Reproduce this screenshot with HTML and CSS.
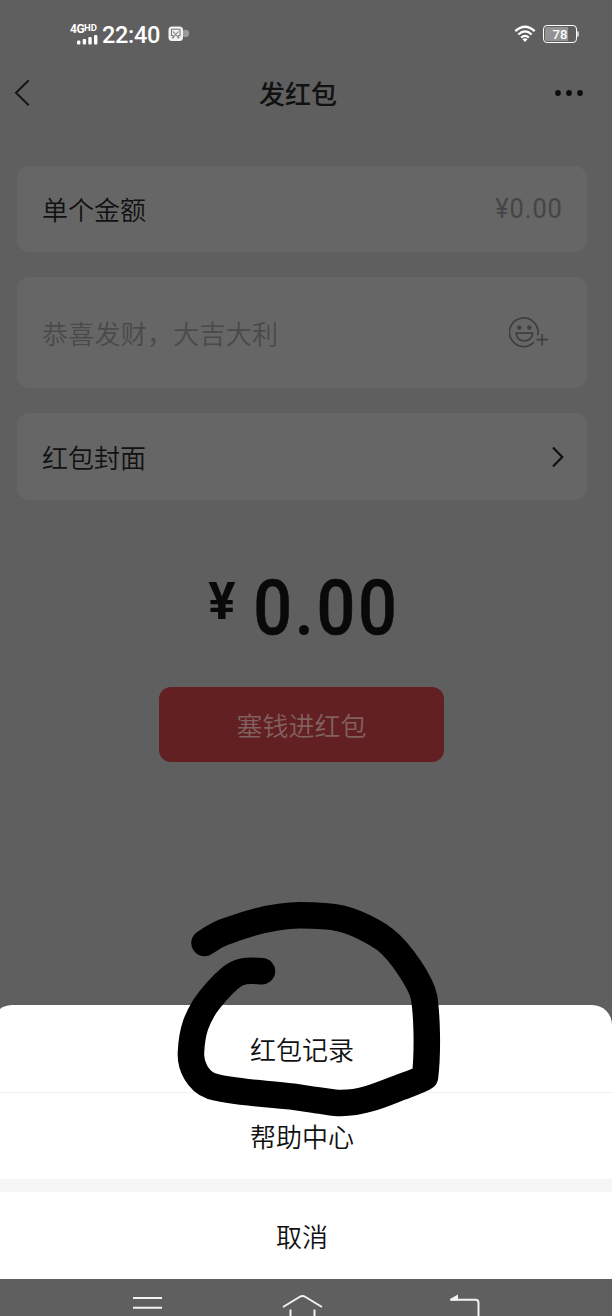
FILE: index.html
```html
<!DOCTYPE html>
<html lang="zh-CN">
<head>
<meta charset="utf-8">
<title>发红包</title>
<link rel="stylesheet" href="styles.css">
</head>
<body>
<div class="screen">
  <header class="status">
    <div class="signal">
      <span class="net">4G<small>HD</small></span>
      <svg width="21" height="10" viewBox="0 0 21 10" fill="#fff"><rect x="0" y="5.500" width="3.400" height="4" rx="1"/><rect x="5.700" y="4" width="3.400" height="5.500" rx="1"/><rect x="11.300" y="2" width="3.400" height="7.500" rx="1"/><rect x="17" y="0" width="3.400" height="9.500" rx="1"/></svg>
    </div>
    <span class="clock">22:40</span>
    <svg class="app" width="22" height="16" viewBox="0 0 22 16"><circle cx="17.500" cy="7.500" r="3.700" fill="#999"/><rect x=".5" y=".5" width="14.500" height="14.500" rx="3.500" fill="#f2f2f2"/><path d="M3 3.200h9.500M3.500 3.500v6h2M12 3.500v6h-2M5 5.500l5.500 6M10.500 5.500l-5.500 6" fill="none" stroke="#777" stroke-width="1.100"/><circle cx="5" cy="11.500" r="1" fill="#777"/><circle cx="10.500" cy="11.500" r="1" fill="#777"/></svg>
    <svg class="wifi" width="22" height="18" viewBox="0 0 22 18" fill="none" stroke="#fff" stroke-width="2.300"><path d="M1.300 6.200Q11-2.800 20.700 6.200M4.300 9.500Q11 3.300 17.700 9.500M7.200 12.600Q11 9.200 14.800 12.600"/><path d="M8.500 14.200Q11 12.500 13.500 14.200L11 17Z" fill="#fff" stroke="none"/></svg>
    <div class="battery"><span>78</span></div>
  </header>

  <nav class="titlebar">
    <svg width="18" height="28" viewBox="0 0 18 28" fill="none" stroke="#151515" stroke-width="2"><path d="M15.700 1.200L3 13.700L15.700 26.200"/></svg>
    <h1>发红包</h1>
    <svg width="30" height="8" viewBox="0 0 30 8" fill="#0d0d0d"><circle cx="4" cy="4" r="2.900"/><circle cx="15" cy="4" r="2.900"/><circle cx="26" cy="4" r="2.900"/></svg>
  </nav>

  <main class="form">
    <section class="card"><span>单个金额</span><span class="money">¥0.00</span></section>
    <section class="card wish"><span class="hint">恭喜发财，大吉大利</span>
      <svg width="40" height="32" viewBox="0 0 40 32" fill="none" stroke="#3f3f3f" stroke-width="1.700"><path d="M28.700 19.200A14.300 14.300 0 1 0 25 26.200"/><circle cx="10.200" cy="11.500" r="2.200" fill="#3f3f3f" stroke="none"/><circle cx="20.400" cy="11.500" r="2.200" fill="#3f3f3f" stroke="none"/><path d="M7.100 17.200H23.600C23 22 20 24.900 15.300 24.900S7.700 22 7.100 17.200Z"/><path d="M27.500 23.700H39M33.200 18V29.700"/></svg>
    </section>
    <section class="card cover"><span>红包封面</span>
      <svg width="13" height="22" viewBox="0 0 13 22" fill="none" stroke="#101010" stroke-width="2.200"><path d="M2 1.500L11.200 11L2 20.500"/></svg>
    </section>
    <div class="total"><span class="yen">¥</span><span class="sum">0.00</span></div>
    <button class="pay">塞钱进红包</button>
  </main>

  <section class="sheet">
    <div class="option">红包记录</div>
    <div class="option">帮助中心</div>
    <div class="option cancel">取消</div>
  </section>

  <footer class="system">
    <svg width="620" height="37" viewBox="-8 0 620 37" fill="none" stroke="#f2f2f2" stroke-width="2"><path d="M133 19H162M133 28.700H162"/><path d="M283 28L299.500 18Q302.500 16.200 305.500 18L322 28M290.500 30.500V37M314.500 30.500V37"/><path d="M451 20.800H475.500Q478.500 20.800 478.500 24V37"/><path d="M450 21.500V20L458 15.500V21.500Z" fill="#f2f2f2" stroke="none"/></svg>
  </footer>
</div>
<svg class="scribble" width="612" height="1316" viewBox="0 0 612 1316"><path d="M204.500 943C215 936 219 933.500 230 930C252 922 278 915.300 300 915.300C317 915.300 329 915.700 341 918.500C356 922 375 932 385 939.500C401 952 421 983 424 997C427 1015 428 1052 425 1077C421 1080 412 1083 401 1087C383 1094 363 1103 341 1103C332 1103 326 1101 315 1100L293 1096.700C260 1093 230 1092 211 1086C198 1081 190 1066 191 1052C192 1030 197 1019 205 1006C213 995 221 986 229 979C239 970 248 970 262 971.200"/></svg>
</body>
</html>
```
FILE: styles.css
```css
* { box-sizing: border-box; }
html { background: #5f5f5f; }
body {
  margin: 0;
  height: 1316px;
  position: relative;
  overflow: hidden;
  color: #111;
  font: 350 26px/36px "Noto Sans CJK SC", sans-serif;
}
svg { display: block; flex: none; }

/* The screen extends 8px past the left edge of the view. */
.screen {
  width: 620px;
  height: 1316px;
  margin-left: -8px;
  display: flex;
  flex-direction: column;
  background: #5f5f5f;
}

.status {
  height: 68px;
  display: flex;
  align-items: center;
  padding: 0 36px 0 77px;
  color: #fff;
  font-family: Roboto, sans-serif;
}
.signal { width: 29px; display: flex; flex-direction: column; align-items: flex-end; }
.net { display: flex; width: 28px; font-size: 12px; line-height: 11px; font-weight: 700; letter-spacing: -.5px; }
.net small { font-size: 9.500px; line-height: 8px; letter-spacing: 0; }
.clock { width: 66px; margin: 2px 0 0 4px; font: 500 23.500px/30px Roboto, sans-serif; letter-spacing: -.3px; }
.wifi { margin-left: auto; }
.battery {
  position: relative;
  width: 34px;
  height: 18px;
  margin-left: 7px;
  margin-right: -1px;
  padding: 1px;
  border: 1.500px solid #fff;
  border-radius: 4px;
  background: linear-gradient(90deg, #929292 76%, #5f5f5f 76%) content-box;
  text-align: center;
  font: 500 13px/15px Roboto, sans-serif;
}
.battery::after {
  content: "";
  position: absolute;
  right: -3px;
  top: 5px;
  width: 2px;
  height: 6px;
  border-radius: 0 2px 2px 0;
  background: #ccc;
}

.titlebar {
  height: 50px;
  display: flex;
  align-items: center;
  justify-content: space-between;
  padding: 0 28px 0 21px;
}
.titlebar h1 { margin: 0 -11px 0 0; font-size: 26px; line-height: 36px; font-weight: 500; }

.form {
  display: flex;
  flex-direction: column;
  gap: 25px;
  height: 887px;
  padding: 48px 25px 0;
}
.card {
  height: 86px;
  padding: 0 25px;
  display: flex;
  align-items: center;
  justify-content: space-between;
  border-radius: 12px;
  background: #666;
}
.money {
  color: #454545;
  margin-right: -1px;
  font: 400 27px/32px Roboto, sans-serif;
  letter-spacing: 1px;
  transform: scaleX(.94);
  transform-origin: right;
}
.wish { height: 111px; padding-right: 38px; }
.wish svg { margin-top: -2px; }
.hint { color: #4a4a4a; padding-top: 1px; letter-spacing: .25px; }
.cover { height: 87px; padding-right: 23px; }
.total {
  height: 84px;
  margin-top: 41px;
  padding-left: 6px;
  display: flex;
  justify-content: center;
  align-items: flex-start;
  gap: 9px;
  color: #090909;
  font-family: Roboto, sans-serif;
}
.yen { font-size: 52px; line-height: 72px; font-weight: 700; transform: scaleX(.98); }
.sum {
  margin-right: -5px;
  font-size: 76px;
  line-height: 84px;
  font-weight: 500;
  letter-spacing: 3px;
  transform: scaleX(.9);
  -webkit-text-stroke: .5px #090909;
}
.pay {
  align-self: center;
  width: 285px;
  height: 75px;
  margin: 12px 1px 0 0;
  padding: 0;
  border: 0;
  border-radius: 12px;
  background: #622022;
  color: #81605f;
  font: inherit;
}

.sheet {
  height: 274px;
  border-radius: 20px 20px 0 0;
  overflow: hidden;
  background: #fff;
}
.option {
  height: 87px;
  display: flex;
  align-items: center;
  justify-content: center;
}
.option + .option { border-top: 1px solid #f0f0f0; }
.option.cancel { height: 100px; border-top: 13px solid #f6f6f6; }
.system { height: 37px; }

.scribble { position: absolute; left: 0; top: 0; }
.scribble path {
  fill: none;
  stroke: #000;
  stroke-width: 26.500px;
  stroke-linecap: round;
  stroke-linejoin: round;
}
```
